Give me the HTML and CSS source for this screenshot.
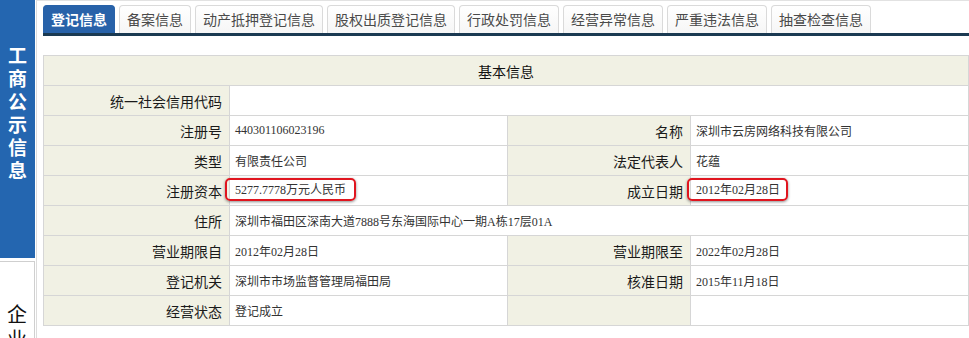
FILE: index.html
```html
<!DOCTYPE html>
<html lang="zh-CN">
<head>
<meta charset="utf-8">
<title>工商公示信息</title>
<link rel="stylesheet" href="styles.css">
</head>
<body>
<div class="page">
  <aside class="side">
    <div class="side-block side-active"><span class="side-text">工商公示信息</span></div>
    <div class="side-block side-other"><span class="side-text">企业公示信息</span></div>
  </aside>
  <main class="main">
    <nav class="tabs">
      <a class="tab tab-active">登记信息</a>
      <a class="tab">备案信息</a>
      <a class="tab">动产抵押登记信息</a>
      <a class="tab">股权出质登记信息</a>
      <a class="tab">行政处罚信息</a>
      <a class="tab">经营异常信息</a>
      <a class="tab">严重违法信息</a>
      <a class="tab">抽查检查信息</a>
    </nav>
    <table class="info">
      <colgroup>
        <col class="c-label1">
        <col class="c-value">
        <col class="c-label2">
        <col class="c-value">
      </colgroup>
      <tr><th class="head" colspan="4">基本信息</th></tr>
      <tr><td class="lbl">统一社会信用代码</td><td class="val" colspan="3"></td></tr>
      <tr><td class="lbl">注册号</td><td class="val">440301106023196</td><td class="lbl">名称</td><td class="val">深圳市云房网络科技有限公司</td></tr>
      <tr><td class="lbl">类型</td><td class="val">有限责任公司</td><td class="lbl">法定代表人</td><td class="val">花蕴</td></tr>
      <tr><td class="lbl">注册资本</td><td class="val"><span class="mark mark-a">5277.7778万元人民币</span></td><td class="lbl">成立日期</td><td class="val"><span class="mark mark-b">2012年02月28日</span></td></tr>
      <tr><td class="lbl">住所</td><td class="val" colspan="3">深圳市福田区深南大道7888号东海国际中心一期A栋17层01A</td></tr>
      <tr><td class="lbl">营业期限自</td><td class="val">2012年02月28日</td><td class="lbl">营业期限至</td><td class="val">2022年02月28日</td></tr>
      <tr><td class="lbl">登记机关</td><td class="val">深圳市市场监督管理局福田局</td><td class="lbl">核准日期</td><td class="val">2015年11月18日</td></tr>
      <tr><td class="lbl">经营状态</td><td class="val">登记成立</td><td class="lbl"></td><td class="val"></td></tr>
    </table>
  </main>
</div>
</body>
</html>
```

FILE: styles.css
```css
html, body {
  margin: 0;
  padding: 0;
  background: #ffffff;
}
body {
  width: 969px;
  height: 338px;
  overflow: hidden;
  font-family: "Noto Sans CJK SC", "Noto Sans", sans-serif;
}
.page {
  display: flex;
  align-items: stretch;
  height: 338px;
}
.side {
  width: 35px;
  flex: none;
  display: flex;
  flex-direction: column;
  gap: 3px;
  overflow: hidden;
}
.side-block {
  display: flex;
  justify-content: center;
}
.side-text {
  display: block;
  width: 20px;
  text-align: center;
  word-break: break-all;
}
.side-active {
  flex: none;
  background: #2466b0;
  height: 258px;
  padding-top: 43px;
  box-sizing: border-box;
}
.side-active .side-text {
  color: #ffffff;
  font-weight: bold;
  font-size: 19px;
  line-height: 23px;
}
.side-other {
  flex: 1 1 auto;
  min-height: 0;
  overflow: hidden;
  border-top: 1px solid #cfcfcf;
  border-right: 1px solid #cfcfcf;
  padding-top: 39px;
}
.side-other .side-text {
  color: #111111;
  font-size: 20px;
  line-height: 25px;
}
.main {
  flex: 1;
  border-left: 1px solid #dcdcdc;
  border-top: 1px solid #e2e2e2;
  margin-left: 1px;
  padding: 4px 0 0 6px;
  display: flex;
  flex-direction: column;
}
.tabs {
  display: flex;
  gap: 4px;
  height: 28px;
  border-bottom: 3px solid #1b3a52;
}
.tab {
  display: block;
  height: 28px;
  box-sizing: border-box;
  padding: 0 7px;
  border: 1px solid #dadada;
  border-bottom: none;
  border-radius: 4px 4px 0 0;
  background: linear-gradient(#ffffff, #f6f6f6);
  color: #4a4a4a;
  font-size: 14px;
  line-height: 27px;
  white-space: nowrap;
}
.tab-active {
  background: #2862a9;
  border-color: #2862a9;
  color: #ffffff;
  font-weight: bold;
}
.info {
  margin-top: 19px;
  width: 925px;
  border-collapse: collapse;
  table-layout: fixed;
  border: 1px solid #d4d4d4;
}
.c-label1 { width: 186px; }
.c-value { width: 278px; }
.c-label2 { width: 183px; }
.info th,
.info td {
  border: 1px solid #d6d6d6;
  height: 30px;
  padding: 0;
  box-sizing: border-box;
}
.head {
  background: #f1f1e4;
  font-weight: normal;
  font-size: 14px;
  color: #111111;
  text-align: center;
}
.lbl {
  background: #f1f1e4;
  text-align: right;
  padding-right: 7px !important;
  font-size: 14px;
  color: #1a1a1a;
}
.val {
  background: #ffffff;
  text-align: left;
  padding-left: 5px !important;
  font-family: "Liberation Serif", "Noto Sans CJK SC", serif;
  font-size: 12px;
  color: #333333;
  white-space: nowrap;
}
.mark {
  position: relative;
  display: inline-block;
  line-height: 14px;
}
.mark::after {
  content: "";
  position: absolute;
  top: -5px;
  bottom: -4px;
  border: 2.5px solid #e0151f;
  border-radius: 5px;
  box-shadow: 0 1px 3px rgba(0, 0, 0, 0.45);
}
.mark-a::after {
  left: -10px;
  right: -10px;
}
.mark-b::after {
  left: -9px;
  right: -8px;
}
```
